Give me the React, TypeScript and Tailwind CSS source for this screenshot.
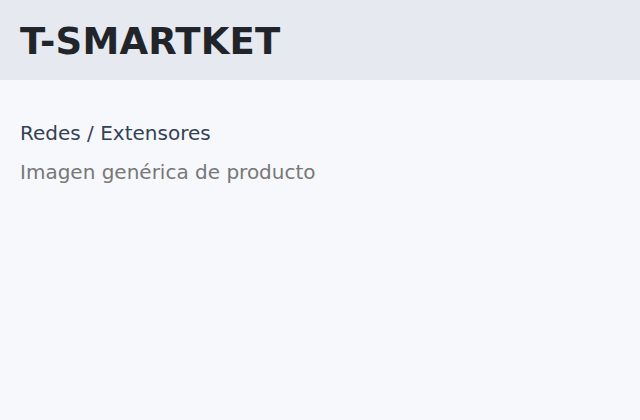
export default function App() {
  return (
    <div className="min-h-screen bg-[#f7f8fb] font-['DejaVu_Sans',sans-serif]">
      <header className="h-20 bg-[#e6e9f0] px-5 pt-[2px] flex items-center">
        <h1 className="text-[37px] leading-none font-bold tracking-[0.2px] text-[#212529]">T-SMARTKET</h1>
      </header>
      <main className="px-5 pt-[39px]">
        <p className="text-[20px] leading-7 text-[#334155]">Redes / Extensores</p>
        <p className="mt-[11px] text-[20px] leading-7 text-[#777777]">Imagen genérica de producto</p>
      </main>
    </div>
  );
}
